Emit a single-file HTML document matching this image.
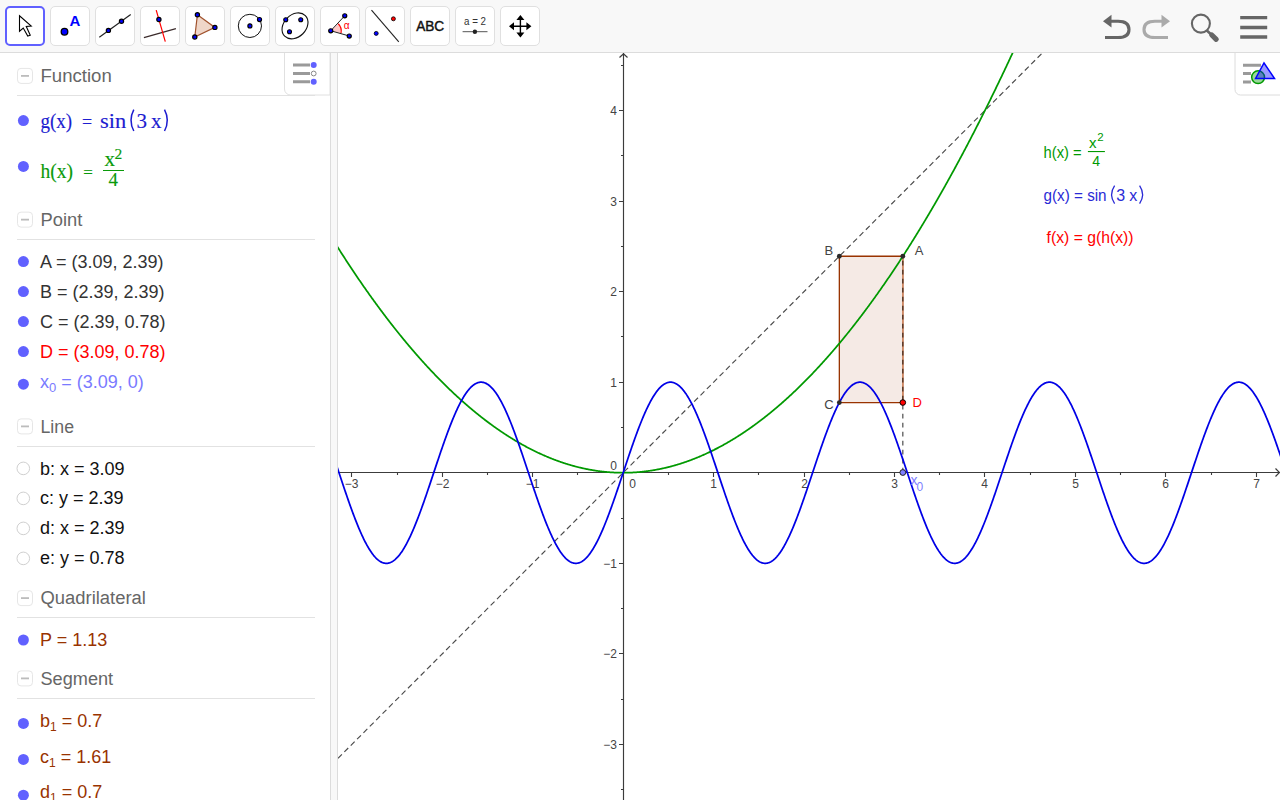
<!DOCTYPE html>
<html><head><meta charset="utf-8">
<style>
*{margin:0;padding:0;box-sizing:border-box}
html,body{width:1280px;height:800px;overflow:hidden;background:#fff;font-family:"Liberation Sans",sans-serif}
#tb{position:absolute;left:0;top:0;width:1280px;height:53px;background:#f8f8f8;border-bottom:1px solid #dcdcdc}
.btn{position:absolute;top:6px;width:40px;height:40px;background:#fff;border:1px solid #e0e0e0;border-radius:5px}
.btn.sel{border:2px solid #6060ff}
.btn svg{position:absolute;left:-1px;top:-1px}
.btn.sel svg{left:-2px;top:-2px}
#alg{position:absolute;left:0;top:53px;width:330px;height:747px;background:#fff}
#split{position:absolute;left:330px;top:53px;width:8px;height:747px;background:#f8f8f8;border-left:1px solid #dcdcdc;border-right:1px solid #dcdcdc}
.hdr{position:absolute;left:40px;font-size:18px;color:#666}
.cb{position:absolute;left:17px;width:15px;height:15px;border:1px solid #e4e4e4;border-radius:3px}
.cb:after{content:"";position:absolute;left:4px;top:6px;width:8px;height:2px;background:#b4b4b4}
.sep{position:absolute;left:17px;width:298px;height:1px;background:#e0e0e0}
.dot{position:absolute;left:18px;width:11px;height:11px;border-radius:50%;background:#6161ff}
.odot{position:absolute;left:17px;width:13px;height:13px;border-radius:50%;border:1px solid #c8c8c8;background:#fff}
.row{position:absolute;left:40px;font-size:17px;color:#333;white-space:nowrap}
.row sub{font-size:12px;vertical-align:-4px;line-height:0}
.ser{font-family:"Liberation Serif",serif}
</style></head><body>
<div id="tb">
  <div class="btn sel" style="left:5px"><svg width="40" height="40"><path d="M14.5,9.75 L14.5,25.25 L18.25,22 L22.75,30 L25.25,29.25 L21.25,20.5 L26.25,20 Z" fill="#fff" stroke="#000" stroke-width="1.1" stroke-linejoin="miter"/></svg></div>
  <div class="btn" style="left:50px"><svg width="40" height="40"><circle cx="14.5" cy="25.75" r="3.3" fill="#0000ff" stroke="#000" stroke-width="1.3"/><text x="19.6" y="20" font-family="Liberation Sans" font-weight="bold" font-size="15" fill="#0000ff">A</text></svg></div>
  <div class="btn" style="left:95px"><svg width="40" height="40"><line x1="4.3" y1="31.2" x2="35.7" y2="8.6" stroke="#222" stroke-width="1.2"/><circle cx="13.4" cy="24.4" r="2.1" fill="#0000ff" stroke="#000" stroke-width="1.2"/><circle cx="26.5" cy="15.3" r="2.1" fill="#0000ff" stroke="#000" stroke-width="1.2"/></svg></div>
  <div class="btn" style="left:140px"><svg width="40" height="40"><line x1="3.9" y1="31.7" x2="35.9" y2="22.7" stroke="#3a2a2a" stroke-width="1.2"/><line x1="16.2" y1="4.1" x2="25.3" y2="35.6" stroke="#ff0000" stroke-width="1.2"/><circle cx="18.9" cy="13.5" r="2.1" fill="#0000ff" stroke="#000" stroke-width="1.2"/></svg></div>
  <div class="btn" style="left:185px"><svg width="40" height="40"><path d="M12.4,8.8 L29.9,21.4 L9.8,31 Z" fill="#efd6c8" stroke="#a0522d" stroke-width="1.2"/><circle cx="12.4" cy="8.8" r="2.1" fill="#0000ff" stroke="#000" stroke-width="1.2"/><circle cx="29.9" cy="21.4" r="2.1" fill="#0000ff" stroke="#000" stroke-width="1.2"/><circle cx="9.8" cy="31" r="2.1" fill="#0000ff" stroke="#000" stroke-width="1.2"/></svg></div>
  <div class="btn" style="left:230px"><svg width="40" height="40"><circle cx="19.9" cy="19.9" r="11.6" fill="none" stroke="#111" stroke-width="1"/><circle cx="19.9" cy="19.9" r="2.05" fill="#0000ff" stroke="#000" stroke-width="1.15"/><circle cx="29.5" cy="13.5" r="2.05" fill="#0000ff" stroke="#000" stroke-width="1.15"/></svg></div>
  <div class="btn" style="left:275px"><svg width="40" height="40"><ellipse cx="20" cy="19.9" rx="14.6" ry="11.1" transform="rotate(-45 20 19.9)" fill="none" stroke="#111" stroke-width="1.1"/><circle cx="10.75" cy="13.75" r="2.0" fill="#0000ff" stroke="#000" stroke-width="1.1"/><circle cx="25.75" cy="13.75" r="2.0" fill="#0000ff" stroke="#000" stroke-width="1.1"/><circle cx="14.5" cy="25.75" r="2.0" fill="#0000ff" stroke="#000" stroke-width="1.1"/></svg></div>
  <div class="btn" style="left:320px"><svg width="40" height="40"><path d="M10.75,24.75 L18.25,17.75 A10.3,10.3 0 0 1 21,27.25 Z" fill="#ffc8c8"/><path d="M18.25,17.75 A10.3,10.3 0 0 1 21,27.25" fill="none" stroke="#ff0000" stroke-width="1.2"/><line x1="10.75" y1="24.75" x2="24.75" y2="9.75" stroke="#222" stroke-width="1"/><line x1="10.75" y1="24.75" x2="29.25" y2="30" stroke="#222" stroke-width="1"/><circle cx="10.75" cy="24.75" r="2.05" fill="#0000ff" stroke="#000" stroke-width="1.15"/><circle cx="24.75" cy="9.75" r="2.05" fill="#0000ff" stroke="#000" stroke-width="1.15"/><circle cx="29.25" cy="30" r="2.05" fill="#0000ff" stroke="#000" stroke-width="1.15"/><text x="23.8" y="22.8" font-family="Liberation Sans" font-size="10" fill="#ff0000">α</text></svg></div>
  <div class="btn" style="left:365px"><svg width="40" height="40"><line x1="6.5" y1="4.1" x2="33.8" y2="35.8" stroke="#222" stroke-width="1.1"/><circle cx="28.4" cy="12.8" r="2" fill="#ff0000" stroke="#000" stroke-width="0.8"/><circle cx="11.2" cy="27.4" r="2" fill="#0000ff" stroke="#000" stroke-width="0.8"/></svg></div>
  <div class="btn" style="left:410px"><svg width="40" height="40"><text x="20.2" y="25.3" text-anchor="middle" font-family="Liberation Sans" font-size="14.2" fill="#111" stroke="#111" stroke-width="0.45" textLength="28" lengthAdjust="spacingAndGlyphs">ABC</text></svg></div>
  <div class="btn" style="left:455px"><svg width="40" height="40"><text x="20" y="18.6" text-anchor="middle" font-family="Liberation Sans" font-size="10.2" fill="#333" textLength="22" lengthAdjust="spacingAndGlyphs">a = 2</text><line x1="7.6" y1="25.7" x2="32.5" y2="25.7" stroke="#555" stroke-width="1"/><circle cx="19.9" cy="25.7" r="2.2" fill="#222"/></svg></div>
  <div class="btn" style="left:500px"><svg width="40" height="40"><path d="M20.4,9 L24.4,14 L16.4,14 Z M20.4,31.4 L24.4,26.4 L16.4,26.4 Z M9,20.3 L14,16.3 L14,24.3 Z M31.4,20.3 L26.4,16.3 L26.4,24.3 Z" fill="#000"/><path d="M20.4,13 V27.4 M13,20.3 H27.4" stroke="#000" stroke-width="1.4"/></svg></div>
  <!-- right icons -->
  <svg width="1280" height="53" style="position:absolute;left:0;top:0">
    <path d="M1103,21.2 L1111.5,14.8 L1111.5,27.6 Z" fill="#666"/>
    <path d="M1110,21.2 H1118 C1126,21.2 1129,24.5 1129,29.4 C1129,34.3 1126,37.5 1118,37.5 H1105" fill="none" stroke="#666" stroke-width="3.1"/>
    <path d="M1170,21.2 L1161.5,14.8 L1161.5,27.6 Z" fill="#aaa"/>
    <path d="M1163,21.2 H1155 C1147,21.2 1144,24.5 1144,29.4 C1144,34.3 1147,37.5 1155,37.5 H1168" fill="none" stroke="#aaa" stroke-width="3.1"/>
    <circle cx="1200.9" cy="23.6" r="9" fill="none" stroke="#666" stroke-width="2.1"/>
    <path d="M1206.5,30.2 L1211.5,34.8" stroke="#666" stroke-width="2.6"/>
    <path d="M1211.8,35 L1216.2,39.3" stroke="#666" stroke-width="5.2" stroke-linecap="round"/>
    <path d="M1240.2,17.7 H1267.2 M1240.2,27.5 H1267.2 M1240.2,37 H1267.2" stroke="#666" stroke-width="3.3"/>
  </svg>
</div>
<div id="alg"></div>
<svg width="330" height="800" style="position:absolute;left:0;top:0">
<rect x="17.5" y="68.4" width="15" height="15" rx="3.5" fill="#fff" stroke="#e6e6e6" stroke-width="1"/>
<rect x="21" y="75" width="8" height="1.8" fill="#bcbcbc"/>
<text x="40.5" y="82" font-family="Liberation Sans, sans-serif" font-size="18" fill="#666" textLength="71.3" lengthAdjust="spacingAndGlyphs">Function</text>
<rect x="17" y="95" width="298" height="1" fill="#e2e2e2"/>
<circle cx="23.4" cy="120.6" r="5.5" fill="#6161ff"/>
<g font-family="Liberation Serif, serif" font-size="21" fill="#1d1dd0" stroke="#1d1dd0" stroke-width="0.15"><text x="40.5" y="127.9" textLength="31.7" lengthAdjust="spacingAndGlyphs">g(x)</text><text x="82" y="127.9" font-size="18">=</text><text x="100" y="127.9" textLength="26.2" lengthAdjust="spacingAndGlyphs">sin</text><text x="136.6" y="127.9">3</text><text x="151" y="127.9">x</text></g>
<path d="M133.8,109.6 Q128.2,120.3 133.8,131" fill="none" stroke="#1d1dd0" stroke-width="1.5"/>
<path d="M164.5,109.6 Q170.1,120.3 164.5,131" fill="none" stroke="#1d1dd0" stroke-width="1.5"/>
<circle cx="23.4" cy="166.4" r="5.5" fill="#6161ff"/>
<g font-family="Liberation Serif, serif" font-size="21" fill="#0a9a0a" stroke="#0a9a0a" stroke-width="0.15"><text x="40.5" y="177.7" textLength="32.5" lengthAdjust="spacingAndGlyphs">h(x)</text><text x="83.3" y="177.7" font-size="17">=</text><text x="104.5" y="165.7">x</text><text x="114.6" y="159" font-size="15.5">2</text><text x="108.5" y="186" font-size="19">4</text></g>
<rect x="103" y="170" width="21" height="1" fill="#0a9a0a"/>
<rect x="17.5" y="212.15" width="15" height="15" rx="3.5" fill="#fff" stroke="#e6e6e6" stroke-width="1"/>
<rect x="21" y="218.75" width="8" height="1.8" fill="#bcbcbc"/>
<text x="40.5" y="225.75" font-family="Liberation Sans, sans-serif" font-size="18" fill="#666" textLength="41.8" lengthAdjust="spacingAndGlyphs">Point</text>
<rect x="17" y="239" width="298" height="1" fill="#e2e2e2"/>
<circle cx="23.4" cy="261.6" r="5.5" fill="#6161ff"/>
<text x="40" y="268" font-family="Liberation Sans, sans-serif" font-size="18" fill="#333">A = (3.09, 2.39)</text>
<circle cx="23.4" cy="291.6" r="5.5" fill="#6161ff"/>
<text x="40" y="298" font-family="Liberation Sans, sans-serif" font-size="18" fill="#333">B = (2.39, 2.39)</text>
<circle cx="23.4" cy="321.6" r="5.5" fill="#6161ff"/>
<text x="40" y="328" font-family="Liberation Sans, sans-serif" font-size="18" fill="#333">C = (2.39, 0.78)</text>
<circle cx="23.4" cy="351.6" r="5.5" fill="#6161ff"/>
<text x="40" y="358" font-family="Liberation Sans, sans-serif" font-size="18" fill="#ff0000">D = (3.09, 0.78)</text>
<circle cx="23.4" cy="384.2" r="5.5" fill="#6161ff"/>
<text x="40" y="387.5" font-family="Liberation Sans, sans-serif" font-size="18" fill="#7a7aff">x<tspan font-size="13" dy="4">0</tspan><tspan dy="-4"> = (3.09, 0)</tspan></text>
<rect x="17.5" y="418.9" width="15" height="15" rx="3.5" fill="#fff" stroke="#e6e6e6" stroke-width="1"/>
<rect x="21" y="425.5" width="8" height="1.8" fill="#bcbcbc"/>
<text x="40.5" y="432.5" font-family="Liberation Sans, sans-serif" font-size="18" fill="#666" textLength="33.5" lengthAdjust="spacingAndGlyphs">Line</text>
<rect x="17" y="446" width="298" height="1" fill="#e2e2e2"/>
<circle cx="23.3" cy="468.4" r="6.3" fill="#fff" stroke="#d0d0d0" stroke-width="1"/>
<text x="40" y="474.5" font-family="Liberation Sans, sans-serif" font-size="18" fill="#111">b: x = 3.09</text>
<circle cx="23.3" cy="498.4" r="6.3" fill="#fff" stroke="#d0d0d0" stroke-width="1"/>
<text x="40" y="504.2" font-family="Liberation Sans, sans-serif" font-size="18" fill="#111">c: y = 2.39</text>
<circle cx="23.3" cy="528.4" r="6.3" fill="#fff" stroke="#d0d0d0" stroke-width="1"/>
<text x="40" y="534.2" font-family="Liberation Sans, sans-serif" font-size="18" fill="#111">d: x = 2.39</text>
<circle cx="23.3" cy="558.4" r="6.3" fill="#fff" stroke="#d0d0d0" stroke-width="1"/>
<text x="40" y="564" font-family="Liberation Sans, sans-serif" font-size="18" fill="#111">e: y = 0.78</text>
<rect x="17.5" y="590.6" width="15" height="15" rx="3.5" fill="#fff" stroke="#e6e6e6" stroke-width="1"/>
<rect x="21" y="597.2" width="8" height="1.8" fill="#bcbcbc"/>
<text x="40.5" y="604.2" font-family="Liberation Sans, sans-serif" font-size="18" fill="#666" textLength="105.4" lengthAdjust="spacingAndGlyphs">Quadrilateral</text>
<rect x="17" y="617" width="298" height="1" fill="#e2e2e2"/>
<circle cx="23.4" cy="640" r="5.5" fill="#6161ff"/>
<text x="40" y="646" font-family="Liberation Sans, sans-serif" font-size="18" fill="#993300">P = 1.13</text>
<rect x="17.5" y="670.9" width="15" height="15" rx="3.5" fill="#fff" stroke="#e6e6e6" stroke-width="1"/>
<rect x="21" y="677.5" width="8" height="1.8" fill="#bcbcbc"/>
<text x="40.5" y="684.5" font-family="Liberation Sans, sans-serif" font-size="18" fill="#666" textLength="72.6" lengthAdjust="spacingAndGlyphs">Segment</text>
<rect x="17" y="698" width="298" height="1" fill="#e2e2e2"/>
<circle cx="23.4" cy="723.4" r="5.5" fill="#6161ff"/>
<text x="40" y="726.9" font-family="Liberation Sans, sans-serif" font-size="18" fill="#993300">b<tspan font-size="12" dy="4">1</tspan><tspan dy="-4"> = 0.7</tspan></text>
<circle cx="23.4" cy="759.4" r="5.5" fill="#6161ff"/>
<text x="40" y="762.5" font-family="Liberation Sans, sans-serif" font-size="18" fill="#993300">c<tspan font-size="12" dy="4">1</tspan><tspan dy="-4"> = 1.61</tspan></text>
<circle cx="23.4" cy="795.2" r="5.5" fill="#6161ff"/>
<text x="40" y="798.1" font-family="Liberation Sans, sans-serif" font-size="18" fill="#993300">d<tspan font-size="12" dy="4">1</tspan><tspan dy="-4"> = 0.7</tspan></text>
<path d="M330,53 V95 H290.5 A6,6 0 0 1 284.5,89 V53" fill="#fff" stroke="#e0e0e0" stroke-width="1"/>
<path d="M293,65 H310 M293,73.5 H310 M293,81.8 H310" stroke="#9a9a9a" stroke-width="3"/>
<circle cx="313.7" cy="65" r="3" fill="#6161ff"/><circle cx="313.7" cy="81.8" r="3" fill="#6161ff"/><circle cx="313.7" cy="73.5" r="2.4" fill="#fff" stroke="#888" stroke-width="1"/>
</svg>
<div id="split"></div>
<svg width="1280" height="800" style="position:absolute;left:0;top:0">
<defs><clipPath id="gv"><rect x="338" y="53" width="942" height="747"/></clipPath></defs>
<g clip-path="url(#gv)">
<line x1="338" y1="472.5" x2="1280" y2="472.5" stroke="#3c3c3c" stroke-width="1.15"/>
<line x1="623.5" y1="53" x2="623.5" y2="800" stroke="#3c3c3c" stroke-width="1.15"/>
<path d="M1275.5,468.5 L1279.5,472.5 L1275.5,476.5" fill="none" stroke="#3c3c3c" stroke-width="1.2"/>
<path d="M619.5,57.5 L623.5,53.8 L627.5,57.5" fill="none" stroke="#3c3c3c" stroke-width="1.2"/>
<path d="M351.5,472.5 v4.5 M397.5,472.5 v2.5 M442.5,472.5 v4.5 M487.5,472.5 v2.5 M532.5,472.5 v4.5 M577.5,472.5 v2.5 M668.5,472.5 v2.5 M713.5,472.5 v4.5 M758.5,472.5 v2.5 M804.5,472.5 v4.5 M849.5,472.5 v2.5 M894.5,472.5 v4.5 M939.5,472.5 v2.5 M984.5,472.5 v4.5 M1030.5,472.5 v2.5 M1075.5,472.5 v4.5 M1120.5,472.5 v2.5 M1165.5,472.5 v4.5 M1211.5,472.5 v2.5 M1256.5,472.5 v4.5 M623.5,789.5 h-2.5 M623.5,744.5 h-4.5 M623.5,699.5 h-2.5 M623.5,653.5 h-4.5 M623.5,608.5 h-2.5 M623.5,563.5 h-4.5 M623.5,518.5 h-2.5 M623.5,427.5 h-2.5 M623.5,382.5 h-4.5 M623.5,336.5 h-2.5 M623.5,291.5 h-4.5 M623.5,246.5 h-2.5 M623.5,201.5 h-4.5 M623.5,155.5 h-2.5 M623.5,110.5 h-4.5 M623.5,65.5 h-2.5" stroke="#3c3c3c" stroke-width="1.1" fill="none"/>
<g font-family="Liberation Sans, sans-serif" font-size="12" fill="#444"><text x="351.5" y="487.7" text-anchor="middle">−3</text><text x="442.5" y="487.7" text-anchor="middle">−2</text><text x="532.5" y="487.7" text-anchor="middle">−1</text><text x="713.5" y="487.7" text-anchor="middle">1</text><text x="804.5" y="487.7" text-anchor="middle">2</text><text x="894.5" y="487.7" text-anchor="middle">3</text><text x="984.5" y="487.7" text-anchor="middle">4</text><text x="1075.5" y="487.7" text-anchor="middle">5</text><text x="1165.5" y="487.7" text-anchor="middle">6</text><text x="1256.5" y="487.7" text-anchor="middle">7</text><text x="617" y="748.8" text-anchor="end">−3</text><text x="617" y="657.8" text-anchor="end">−2</text><text x="617" y="567.8" text-anchor="end">−1</text><text x="617" y="386.8" text-anchor="end">1</text><text x="617" y="295.8" text-anchor="end">2</text><text x="617" y="205.8" text-anchor="end">3</text><text x="617" y="114.8" text-anchor="end">4</text><text x="629.3" y="487.7">0</text><text x="610.2" y="469.7">0</text></g>
<line x1="338.00" y1="758.28" x2="1042.34" y2="53.00" stroke="#4a4a4a" stroke-width="1.15" stroke-dasharray="5.5 3.5"/>
<path d="M839.34,256.27 L902.82,256.27 L902.82,402.53 L839.34,402.53 Z" fill="rgba(153,51,0,0.1)" stroke="#993300" stroke-width="1.3"/>
<line x1="902.82" y1="402.53" x2="902.82" y2="256.27" stroke="#d4906c" stroke-width="1.4"/>
<line x1="902.82" y1="472.5" x2="902.82" y2="256.27" stroke="rgba(0,0,0,0.7)" stroke-width="1.2" stroke-dasharray="4.75 4.25"/>
<path d="M336.00,244.54 L336.50,245.34 L337.00,246.13 L337.50,246.92 L338.00,247.71 L338.50,248.50 L339.00,249.29 L339.50,250.07 L340.00,250.86 L340.50,251.64 L341.00,252.42 L341.50,253.20 L342.00,253.98 L342.50,254.76 L343.00,255.53 L343.50,256.31 L344.00,257.08 L344.50,257.85 L345.00,258.62 L345.50,259.39 L346.00,260.16 L346.50,260.93 L347.00,261.69 L347.50,262.46 L348.00,263.22 L348.50,263.98 L349.00,264.74 L349.50,265.50 L350.00,266.25 L350.50,267.01 L351.00,267.76 L351.50,268.51 L352.00,269.27 L352.50,270.02 L353.00,270.76 L353.50,271.51 L354.00,272.26 L354.50,273.00 L355.00,273.74 L355.50,274.48 L356.00,275.22 L356.50,275.96 L357.00,276.70 L357.50,277.44 L358.00,278.17 L358.50,278.90 L359.00,279.64 L359.50,280.37 L360.00,281.10 L360.50,281.82 L361.00,282.55 L361.50,283.27 L362.00,284.00 L362.50,284.72 L363.00,285.44 L363.50,286.16 L364.00,286.88 L364.50,287.59 L365.00,288.31 L365.50,289.02 L366.00,289.74 L366.50,290.45 L367.00,291.16 L367.50,291.86 L368.00,292.57 L368.50,293.28 L369.00,293.98 L369.50,294.68 L370.00,295.39 L370.50,296.08 L371.00,296.78 L371.50,297.48 L372.00,298.18 L372.50,298.87 L373.00,299.56 L373.50,300.26 L374.00,300.95 L374.50,301.63 L375.00,302.32 L375.50,303.01 L376.00,303.69 L376.50,304.38 L377.00,305.06 L377.50,305.74 L378.00,306.42 L378.50,307.10 L379.00,307.77 L379.50,308.45 L380.00,309.12 L380.50,309.79 L381.00,310.46 L381.50,311.13 L382.00,311.80 L382.50,312.47 L383.00,313.13 L383.50,313.80 L384.00,314.46 L384.50,315.12 L385.00,315.78 L385.50,316.44 L386.00,317.10 L386.50,317.75 L387.00,318.41 L387.50,319.06 L388.00,319.71 L388.50,320.36 L389.00,321.01 L389.50,321.66 L390.00,322.30 L390.50,322.95 L391.00,323.59 L391.50,324.23 L392.00,324.87 L392.50,325.51 L393.00,326.15 L393.50,326.79 L394.00,327.42 L394.50,328.05 L395.00,328.69 L395.50,329.32 L396.00,329.95 L396.50,330.57 L397.00,331.20 L397.50,331.83 L398.00,332.45 L398.50,333.07 L399.00,333.69 L399.50,334.31 L400.00,334.93 L400.50,335.55 L401.00,336.16 L401.50,336.78 L402.00,337.39 L402.50,338.00 L403.00,338.61 L403.50,339.22 L404.00,339.83 L404.50,340.43 L405.00,341.04 L405.50,341.64 L406.00,342.24 L406.50,342.84 L407.00,343.44 L407.50,344.04 L408.00,344.64 L408.50,345.23 L409.00,345.82 L409.50,346.42 L410.00,347.01 L410.50,347.60 L411.00,348.18 L411.50,348.77 L412.00,349.36 L412.50,349.94 L413.00,350.52 L413.50,351.10 L414.00,351.68 L414.50,352.26 L415.00,352.84 L415.50,353.41 L416.00,353.99 L416.50,354.56 L417.00,355.13 L417.50,355.70 L418.00,356.27 L418.50,356.84 L419.00,357.40 L419.50,357.97 L420.00,358.53 L420.50,359.09 L421.00,359.65 L421.50,360.21 L422.00,360.77 L422.50,361.32 L423.00,361.88 L423.50,362.43 L424.00,362.98 L424.50,363.53 L425.00,364.08 L425.50,364.63 L426.00,365.18 L426.50,365.72 L427.00,366.26 L427.50,366.81 L428.00,367.35 L428.50,367.89 L429.00,368.43 L429.50,368.96 L430.00,369.50 L430.50,370.03 L431.00,370.56 L431.50,371.09 L432.00,371.62 L432.50,372.15 L433.00,372.68 L433.50,373.21 L434.00,373.73 L434.50,374.25 L435.00,374.77 L435.50,375.29 L436.00,375.81 L436.50,376.33 L437.00,376.85 L437.50,377.36 L438.00,377.87 L438.50,378.39 L439.00,378.90 L439.50,379.40 L440.00,379.91 L440.50,380.42 L441.00,380.92 L441.50,381.43 L442.00,381.93 L442.50,382.43 L443.00,382.93 L443.50,383.43 L444.00,383.92 L444.50,384.42 L445.00,384.91 L445.50,385.40 L446.00,385.90 L446.50,386.38 L447.00,386.87 L447.50,387.36 L448.00,387.85 L448.50,388.33 L449.00,388.81 L449.50,389.29 L450.00,389.77 L450.50,390.25 L451.00,390.73 L451.50,391.20 L452.00,391.68 L452.50,392.15 L453.00,392.62 L453.50,393.09 L454.00,393.56 L454.50,394.03 L455.00,394.50 L455.50,394.96 L456.00,395.42 L456.50,395.89 L457.00,396.35 L457.50,396.81 L458.00,397.26 L458.50,397.72 L459.00,398.17 L459.50,398.63 L460.00,399.08 L460.50,399.53 L461.00,399.98 L461.50,400.43 L462.00,400.88 L462.50,401.32 L463.00,401.77 L463.50,402.21 L464.00,402.65 L464.50,403.09 L465.00,403.53 L465.50,403.96 L466.00,404.40 L466.50,404.83 L467.00,405.27 L467.50,405.70 L468.00,406.13 L468.50,406.56 L469.00,406.98 L469.50,407.41 L470.00,407.83 L470.50,408.26 L471.00,408.68 L471.50,409.10 L472.00,409.52 L472.50,409.94 L473.00,410.35 L473.50,410.77 L474.00,411.18 L474.50,411.59 L475.00,412.00 L475.50,412.41 L476.00,412.82 L476.50,413.23 L477.00,413.63 L477.50,414.04 L478.00,414.44 L478.50,414.84 L479.00,415.24 L479.50,415.64 L480.00,416.04 L480.50,416.43 L481.00,416.83 L481.50,417.22 L482.00,417.61 L482.50,418.00 L483.00,418.39 L483.50,418.77 L484.00,419.16 L484.50,419.55 L485.00,419.93 L485.50,420.31 L486.00,420.69 L486.50,421.07 L487.00,421.45 L487.50,421.82 L488.00,422.20 L488.50,422.57 L489.00,422.94 L489.50,423.31 L490.00,423.68 L490.50,424.05 L491.00,424.42 L491.50,424.78 L492.00,425.15 L492.50,425.51 L493.00,425.87 L493.50,426.23 L494.00,426.59 L494.50,426.94 L495.00,427.30 L495.50,427.65 L496.00,428.00 L496.50,428.36 L497.00,428.71 L497.50,429.05 L498.00,429.40 L498.50,429.75 L499.00,430.09 L499.50,430.43 L500.00,430.78 L500.50,431.12 L501.00,431.45 L501.50,431.79 L502.00,432.13 L502.50,432.46 L503.00,432.80 L503.50,433.13 L504.00,433.46 L504.50,433.79 L505.00,434.12 L505.50,434.44 L506.00,434.77 L506.50,435.09 L507.00,435.41 L507.50,435.73 L508.00,436.05 L508.50,436.37 L509.00,436.69 L509.50,437.00 L510.00,437.32 L510.50,437.63 L511.00,437.94 L511.50,438.25 L512.00,438.56 L512.50,438.86 L513.00,439.17 L513.50,439.47 L514.00,439.78 L514.50,440.08 L515.00,440.38 L515.50,440.68 L516.00,440.97 L516.50,441.27 L517.00,441.56 L517.50,441.86 L518.00,442.15 L518.50,442.44 L519.00,442.73 L519.50,443.02 L520.00,443.30 L520.50,443.59 L521.00,443.87 L521.50,444.15 L522.00,444.43 L522.50,444.71 L523.00,444.99 L523.50,445.27 L524.00,445.54 L524.50,445.82 L525.00,446.09 L525.50,446.36 L526.00,446.63 L526.50,446.90 L527.00,447.16 L527.50,447.43 L528.00,447.69 L528.50,447.96 L529.00,448.22 L529.50,448.48 L530.00,448.74 L530.50,448.99 L531.00,449.25 L531.50,449.50 L532.00,449.76 L532.50,450.01 L533.00,450.26 L533.50,450.51 L534.00,450.75 L534.50,451.00 L535.00,451.24 L535.50,451.49 L536.00,451.73 L536.50,451.97 L537.00,452.21 L537.50,452.45 L538.00,452.68 L538.50,452.92 L539.00,453.15 L539.50,453.38 L540.00,453.61 L540.50,453.84 L541.00,454.07 L541.50,454.30 L542.00,454.52 L542.50,454.75 L543.00,454.97 L543.50,455.19 L544.00,455.41 L544.50,455.63 L545.00,455.85 L545.50,456.06 L546.00,456.28 L546.50,456.49 L547.00,456.70 L547.50,456.91 L548.00,457.12 L548.50,457.33 L549.00,457.53 L549.50,457.74 L550.00,457.94 L550.50,458.14 L551.00,458.34 L551.50,458.54 L552.00,458.74 L552.50,458.94 L553.00,459.13 L553.50,459.32 L554.00,459.52 L554.50,459.71 L555.00,459.90 L555.50,460.08 L556.00,460.27 L556.50,460.46 L557.00,460.64 L557.50,460.82 L558.00,461.00 L558.50,461.18 L559.00,461.36 L559.50,461.54 L560.00,461.71 L560.50,461.89 L561.00,462.06 L561.50,462.23 L562.00,462.40 L562.50,462.57 L563.00,462.74 L563.50,462.90 L564.00,463.07 L564.50,463.23 L565.00,463.39 L565.50,463.55 L566.00,463.71 L566.50,463.87 L567.00,464.02 L567.50,464.18 L568.00,464.33 L568.50,464.48 L569.00,464.63 L569.50,464.78 L570.00,464.93 L570.50,465.08 L571.00,465.22 L571.50,465.37 L572.00,465.51 L572.50,465.65 L573.00,465.79 L573.50,465.93 L574.00,466.06 L574.50,466.20 L575.00,466.33 L575.50,466.47 L576.00,466.60 L576.50,466.73 L577.00,466.86 L577.50,466.98 L578.00,467.11 L578.50,467.23 L579.00,467.36 L579.50,467.48 L580.00,467.60 L580.50,467.72 L581.00,467.83 L581.50,467.95 L582.00,468.06 L582.50,468.18 L583.00,468.29 L583.50,468.40 L584.00,468.51 L584.50,468.62 L585.00,468.72 L585.50,468.83 L586.00,468.93 L586.50,469.03 L587.00,469.13 L587.50,469.23 L588.00,469.33 L588.50,469.43 L589.00,469.52 L589.50,469.62 L590.00,469.71 L590.50,469.80 L591.00,469.89 L591.50,469.98 L592.00,470.06 L592.50,470.15 L593.00,470.23 L593.50,470.32 L594.00,470.40 L594.50,470.48 L595.00,470.56 L595.50,470.63 L596.00,470.71 L596.50,470.78 L597.00,470.86 L597.50,470.93 L598.00,471.00 L598.50,471.07 L599.00,471.14 L599.50,471.20 L600.00,471.27 L600.50,471.33 L601.00,471.39 L601.50,471.45 L602.00,471.51 L602.50,471.57 L603.00,471.63 L603.50,471.68 L604.00,471.74 L604.50,471.79 L605.00,471.84 L605.50,471.89 L606.00,471.94 L606.50,471.98 L607.00,472.03 L607.50,472.07 L608.00,472.11 L608.50,472.16 L609.00,472.20 L609.50,472.23 L610.00,472.27 L610.50,472.31 L611.00,472.34 L611.50,472.37 L612.00,472.41 L612.50,472.44 L613.00,472.46 L613.50,472.49 L614.00,472.52 L614.50,472.54 L615.00,472.57 L615.50,472.59 L616.00,472.61 L616.50,472.63 L617.00,472.65 L617.50,472.66 L618.00,472.68 L618.50,472.69 L619.00,472.70 L619.50,472.71 L620.00,472.72 L620.50,472.73 L621.00,472.74 L621.50,472.74 L622.00,472.75 L622.50,472.75 L623.00,472.75 L623.50,472.75 L624.00,472.75 L624.50,472.74 L625.00,472.74 L625.50,472.73 L626.00,472.73 L626.50,472.72 L627.00,472.71 L627.50,472.70 L628.00,472.68 L628.50,472.67 L629.00,472.66 L629.50,472.64 L630.00,472.62 L630.50,472.60 L631.00,472.58 L631.50,472.56 L632.00,472.53 L632.50,472.51 L633.00,472.48 L633.50,472.45 L634.00,472.42 L634.50,472.39 L635.00,472.36 L635.50,472.33 L636.00,472.29 L636.50,472.26 L637.00,472.22 L637.50,472.18 L638.00,472.14 L638.50,472.10 L639.00,472.05 L639.50,472.01 L640.00,471.96 L640.50,471.92 L641.00,471.87 L641.50,471.82 L642.00,471.77 L642.50,471.71 L643.00,471.66 L643.50,471.60 L644.00,471.55 L644.50,471.49 L645.00,471.43 L645.50,471.37 L646.00,471.30 L646.50,471.24 L647.00,471.18 L647.50,471.11 L648.00,471.04 L648.50,470.97 L649.00,470.90 L649.50,470.83 L650.00,470.75 L650.50,470.68 L651.00,470.60 L651.50,470.53 L652.00,470.45 L652.50,470.37 L653.00,470.28 L653.50,470.20 L654.00,470.12 L654.50,470.03 L655.00,469.94 L655.50,469.85 L656.00,469.76 L656.50,469.67 L657.00,469.58 L657.50,469.48 L658.00,469.39 L658.50,469.29 L659.00,469.19 L659.50,469.09 L660.00,468.99 L660.50,468.89 L661.00,468.78 L661.50,468.68 L662.00,468.57 L662.50,468.46 L663.00,468.35 L663.50,468.24 L664.00,468.13 L664.50,468.02 L665.00,467.90 L665.50,467.79 L666.00,467.67 L666.50,467.55 L667.00,467.43 L667.50,467.31 L668.00,467.18 L668.50,467.06 L669.00,466.93 L669.50,466.80 L670.00,466.68 L670.50,466.54 L671.00,466.41 L671.50,466.28 L672.00,466.15 L672.50,466.01 L673.00,465.87 L673.50,465.73 L674.00,465.59 L674.50,465.45 L675.00,465.31 L675.50,465.17 L676.00,465.02 L676.50,464.87 L677.00,464.72 L677.50,464.57 L678.00,464.42 L678.50,464.27 L679.00,464.12 L679.50,463.96 L680.00,463.81 L680.50,463.65 L681.00,463.49 L681.50,463.33 L682.00,463.16 L682.50,463.00 L683.00,462.84 L683.50,462.67 L684.00,462.50 L684.50,462.33 L685.00,462.16 L685.50,461.99 L686.00,461.82 L686.50,461.64 L687.00,461.47 L687.50,461.29 L688.00,461.11 L688.50,460.93 L689.00,460.75 L689.50,460.57 L690.00,460.38 L690.50,460.20 L691.00,460.01 L691.50,459.82 L692.00,459.63 L692.50,459.44 L693.00,459.25 L693.50,459.05 L694.00,458.86 L694.50,458.66 L695.00,458.46 L695.50,458.26 L696.00,458.06 L696.50,457.86 L697.00,457.66 L697.50,457.45 L698.00,457.24 L698.50,457.04 L699.00,456.83 L699.50,456.62 L700.00,456.40 L700.50,456.19 L701.00,455.98 L701.50,455.76 L702.00,455.54 L702.50,455.32 L703.00,455.10 L703.50,454.88 L704.00,454.66 L704.50,454.43 L705.00,454.21 L705.50,453.98 L706.00,453.75 L706.50,453.52 L707.00,453.29 L707.50,453.06 L708.00,452.82 L708.50,452.59 L709.00,452.35 L709.50,452.11 L710.00,451.87 L710.50,451.63 L711.00,451.39 L711.50,451.15 L712.00,450.90 L712.50,450.65 L713.00,450.41 L713.50,450.16 L714.00,449.91 L714.50,449.65 L715.00,449.40 L715.50,449.15 L716.00,448.89 L716.50,448.63 L717.00,448.37 L717.50,448.11 L718.00,447.85 L718.50,447.59 L719.00,447.32 L719.50,447.06 L720.00,446.79 L720.50,446.52 L721.00,446.25 L721.50,445.98 L722.00,445.71 L722.50,445.43 L723.00,445.16 L723.50,444.88 L724.00,444.60 L724.50,444.32 L725.00,444.04 L725.50,443.76 L726.00,443.47 L726.50,443.19 L727.00,442.90 L727.50,442.61 L728.00,442.32 L728.50,442.03 L729.00,441.74 L729.50,441.45 L730.00,441.15 L730.50,440.86 L731.00,440.56 L731.50,440.26 L732.00,439.96 L732.50,439.66 L733.00,439.35 L733.50,439.05 L734.00,438.74 L734.50,438.43 L735.00,438.13 L735.50,437.82 L736.00,437.50 L736.50,437.19 L737.00,436.88 L737.50,436.56 L738.00,436.24 L738.50,435.92 L739.00,435.60 L739.50,435.28 L740.00,434.96 L740.50,434.64 L741.00,434.31 L741.50,433.98 L742.00,433.66 L742.50,433.33 L743.00,433.00 L743.50,432.66 L744.00,432.33 L744.50,431.99 L745.00,431.66 L745.50,431.32 L746.00,430.98 L746.50,430.64 L747.00,430.30 L747.50,429.95 L748.00,429.61 L748.50,429.26 L749.00,428.92 L749.50,428.57 L750.00,428.22 L750.50,427.86 L751.00,427.51 L751.50,427.16 L752.00,426.80 L752.50,426.44 L753.00,426.08 L753.50,425.72 L754.00,425.36 L754.50,425.00 L755.00,424.64 L755.50,424.27 L756.00,423.90 L756.50,423.53 L757.00,423.17 L757.50,422.79 L758.00,422.42 L758.50,422.05 L759.00,421.67 L759.50,421.30 L760.00,420.92 L760.50,420.54 L761.00,420.16 L761.50,419.78 L762.00,419.39 L762.50,419.01 L763.00,418.62 L763.50,418.23 L764.00,417.84 L764.50,417.45 L765.00,417.06 L765.50,416.67 L766.00,416.27 L766.50,415.88 L767.00,415.48 L767.50,415.08 L768.00,414.68 L768.50,414.28 L769.00,413.88 L769.50,413.47 L770.00,413.07 L770.50,412.66 L771.00,412.25 L771.50,411.84 L772.00,411.43 L772.50,411.02 L773.00,410.60 L773.50,410.19 L774.00,409.77 L774.50,409.35 L775.00,408.93 L775.50,408.51 L776.00,408.09 L776.50,407.67 L777.00,407.24 L777.50,406.81 L778.00,406.39 L778.50,405.96 L779.00,405.53 L779.50,405.09 L780.00,404.66 L780.50,404.23 L781.00,403.79 L781.50,403.35 L782.00,402.91 L782.50,402.47 L783.00,402.03 L783.50,401.59 L784.00,401.14 L784.50,400.70 L785.00,400.25 L785.50,399.80 L786.00,399.35 L786.50,398.90 L787.00,398.45 L787.50,397.99 L788.00,397.54 L788.50,397.08 L789.00,396.62 L789.50,396.16 L790.00,395.70 L790.50,395.24 L791.00,394.78 L791.50,394.31 L792.00,393.84 L792.50,393.38 L793.00,392.91 L793.50,392.44 L794.00,391.96 L794.50,391.49 L795.00,391.01 L795.50,390.54 L796.00,390.06 L796.50,389.58 L797.00,389.10 L797.50,388.62 L798.00,388.14 L798.50,387.65 L799.00,387.17 L799.50,386.68 L800.00,386.19 L800.50,385.70 L801.00,385.21 L801.50,384.71 L802.00,384.22 L802.50,383.72 L803.00,383.23 L803.50,382.73 L804.00,382.23 L804.50,381.73 L805.00,381.23 L805.50,380.72 L806.00,380.22 L806.50,379.71 L807.00,379.20 L807.50,378.69 L808.00,378.18 L808.50,377.67 L809.00,377.15 L809.50,376.64 L810.00,376.12 L810.50,375.61 L811.00,375.09 L811.50,374.57 L812.00,374.04 L812.50,373.52 L813.00,373.00 L813.50,372.47 L814.00,371.94 L814.50,371.41 L815.00,370.88 L815.50,370.35 L816.00,369.82 L816.50,369.28 L817.00,368.75 L817.50,368.21 L818.00,367.67 L818.50,367.13 L819.00,366.59 L819.50,366.05 L820.00,365.50 L820.50,364.96 L821.00,364.41 L821.50,363.86 L822.00,363.31 L822.50,362.76 L823.00,362.21 L823.50,361.66 L824.00,361.10 L824.50,360.54 L825.00,359.99 L825.50,359.43 L826.00,358.87 L826.50,358.30 L827.00,357.74 L827.50,357.18 L828.00,356.61 L828.50,356.04 L829.00,355.47 L829.50,354.90 L830.00,354.33 L830.50,353.76 L831.00,353.18 L831.50,352.61 L832.00,352.03 L832.50,351.45 L833.00,350.87 L833.50,350.29 L834.00,349.71 L834.50,349.12 L835.00,348.54 L835.50,347.95 L836.00,347.36 L836.50,346.77 L837.00,346.18 L837.50,345.59 L838.00,344.99 L838.50,344.40 L839.00,343.80 L839.50,343.20 L840.00,342.60 L840.50,342.00 L841.00,341.40 L841.50,340.80 L842.00,340.19 L842.50,339.59 L843.00,338.98 L843.50,338.37 L844.00,337.76 L844.50,337.15 L845.00,336.53 L845.50,335.92 L846.00,335.30 L846.50,334.68 L847.00,334.07 L847.50,333.45 L848.00,332.82 L848.50,332.20 L849.00,331.58 L849.50,330.95 L850.00,330.32 L850.50,329.70 L851.00,329.07 L851.50,328.43 L852.00,327.80 L852.50,327.17 L853.00,326.53 L853.50,325.90 L854.00,325.26 L854.50,324.62 L855.00,323.98 L855.50,323.33 L856.00,322.69 L856.50,322.05 L857.00,321.40 L857.50,320.75 L858.00,320.10 L858.50,319.45 L859.00,318.80 L859.50,318.15 L860.00,317.49 L860.50,316.83 L861.00,316.18 L861.50,315.52 L862.00,314.86 L862.50,314.20 L863.00,313.53 L863.50,312.87 L864.00,312.20 L864.50,311.53 L865.00,310.87 L865.50,310.20 L866.00,309.52 L866.50,308.85 L867.00,308.18 L867.50,307.50 L868.00,306.82 L868.50,306.15 L869.00,305.47 L869.50,304.79 L870.00,304.10 L870.50,303.42 L871.00,302.73 L871.50,302.05 L872.00,301.36 L872.50,300.67 L873.00,299.98 L873.50,299.29 L874.00,298.59 L874.50,297.90 L875.00,297.20 L875.50,296.50 L876.00,295.81 L876.50,295.10 L877.00,294.40 L877.50,293.70 L878.00,292.99 L878.50,292.29 L879.00,291.58 L879.50,290.87 L880.00,290.16 L880.50,289.45 L881.00,288.74 L881.50,288.02 L882.00,287.31 L882.50,286.59 L883.00,285.87 L883.50,285.15 L884.00,284.43 L884.50,283.71 L885.00,282.98 L885.50,282.26 L886.00,281.53 L886.50,280.80 L887.00,280.07 L887.50,279.34 L888.00,278.61 L888.50,277.88 L889.00,277.14 L889.50,276.41 L890.00,275.67 L890.50,274.93 L891.00,274.19 L891.50,273.45 L892.00,272.70 L892.50,271.96 L893.00,271.21 L893.50,270.46 L894.00,269.72 L894.50,268.97 L895.00,268.21 L895.50,267.46 L896.00,266.71 L896.50,265.95 L897.00,265.19 L897.50,264.43 L898.00,263.67 L898.50,262.91 L899.00,262.15 L899.50,261.39 L900.00,260.62 L900.50,259.85 L901.00,259.09 L901.50,258.32 L902.00,257.54 L902.50,256.77 L903.00,256.00 L903.50,255.22 L904.00,254.45 L904.50,253.67 L905.00,252.89 L905.50,252.11 L906.00,251.33 L906.50,250.54 L907.00,249.76 L907.50,248.97 L908.00,248.18 L908.50,247.39 L909.00,246.60 L909.50,245.81 L910.00,245.02 L910.50,244.22 L911.00,243.43 L911.50,242.63 L912.00,241.83 L912.50,241.03 L913.00,240.23 L913.50,239.43 L914.00,238.62 L914.50,237.82 L915.00,237.01 L915.50,236.20 L916.00,235.39 L916.50,234.58 L917.00,233.77 L917.50,232.96 L918.00,232.14 L918.50,231.32 L919.00,230.50 L919.50,229.69 L920.00,228.86 L920.50,228.04 L921.00,227.22 L921.50,226.39 L922.00,225.57 L922.50,224.74 L923.00,223.91 L923.50,223.08 L924.00,222.25 L924.50,221.41 L925.00,220.58 L925.50,219.74 L926.00,218.91 L926.50,218.07 L927.00,217.23 L927.50,216.39 L928.00,215.54 L928.50,214.70 L929.00,213.85 L929.50,213.00 L930.00,212.16 L930.50,211.31 L931.00,210.45 L931.50,209.60 L932.00,208.75 L932.50,207.89 L933.00,207.04 L933.50,206.18 L934.00,205.32 L934.50,204.46 L935.00,203.59 L935.50,202.73 L936.00,201.87 L936.50,201.00 L937.00,200.13 L937.50,199.26 L938.00,198.39 L938.50,197.52 L939.00,196.65 L939.50,195.77 L940.00,194.89 L940.50,194.02 L941.00,193.14 L941.50,192.26 L942.00,191.38 L942.50,190.49 L943.00,189.61 L943.50,188.72 L944.00,187.83 L944.50,186.95 L945.00,186.06 L945.50,185.16 L946.00,184.27 L946.50,183.38 L947.00,182.48 L947.50,181.58 L948.00,180.69 L948.50,179.79 L949.00,178.89 L949.50,177.98 L950.00,177.08 L950.50,176.17 L951.00,175.27 L951.50,174.36 L952.00,173.45 L952.50,172.54 L953.00,171.63 L953.50,170.71 L954.00,169.80 L954.50,168.88 L955.00,167.96 L955.50,167.04 L956.00,166.12 L956.50,165.20 L957.00,164.28 L957.50,163.35 L958.00,162.43 L958.50,161.50 L959.00,160.57 L959.50,159.64 L960.00,158.71 L960.50,157.78 L961.00,156.84 L961.50,155.91 L962.00,154.97 L962.50,154.03 L963.00,153.09 L963.50,152.15 L964.00,151.21 L964.50,150.26 L965.00,149.32 L965.50,148.37 L966.00,147.42 L966.50,146.47 L967.00,145.52 L967.50,144.57 L968.00,143.62 L968.50,142.66 L969.00,141.70 L969.50,140.75 L970.00,139.79 L970.50,138.83 L971.00,137.86 L971.50,136.90 L972.00,135.94 L972.50,134.97 L973.00,134.00 L973.50,133.03 L974.00,132.06 L974.50,131.09 L975.00,130.12 L975.50,129.14 L976.00,128.17 L976.50,127.19 L977.00,126.21 L977.50,125.23 L978.00,124.25 L978.50,123.27 L979.00,122.28 L979.50,121.30 L980.00,120.31 L980.50,119.32 L981.00,118.33 L981.50,117.34 L982.00,116.35 L982.50,115.36 L983.00,114.36 L983.50,113.36 L984.00,112.37 L984.50,111.37 L985.00,110.37 L985.50,109.36 L986.00,108.36 L986.50,107.36 L987.00,106.35 L987.50,105.34 L988.00,104.33 L988.50,103.32 L989.00,102.31 L989.50,101.30 L990.00,100.28 L990.50,99.27 L991.00,98.25 L991.50,97.23 L992.00,96.21 L992.50,95.19 L993.00,94.17 L993.50,93.14 L994.00,92.12 L994.50,91.09 L995.00,90.06 L995.50,89.03 L996.00,88.00 L996.50,86.97 L997.00,85.93 L997.50,84.90 L998.00,83.86 L998.50,82.82 L999.00,81.78 L999.50,80.74 L1000.00,79.70 L1000.50,78.66 L1001.00,77.61 L1001.50,76.56 L1002.00,75.52 L1002.50,74.47 L1003.00,73.42 L1003.50,72.36 L1004.00,71.31 L1004.50,70.26 L1005.00,69.20 L1005.50,68.14 L1006.00,67.08 L1006.50,66.02 L1007.00,64.96 L1007.50,63.90 L1008.00,62.83 L1008.50,61.77 L1009.00,60.70 L1009.50,59.63 L1010.00,58.56 L1010.50,57.49 L1011.00,56.42 L1011.50,55.34 L1012.00,54.27 L1012.50,53.19 L1013.00,52.11 L1013.50,51.03 L1014.00,49.95 L1014.50,48.87 L1015.00,47.79 L1015.50,46.70 L1016.00,45.61 L1016.50,44.53 L1017.00,43.44 L1017.50,42.35 L1018.00,41.25 L1018.50,40.16 L1019.00,39.07 L1019.50,37.97 L1020.00,36.87 L1020.50,35.77 L1021.00,34.67 L1021.50,33.57 L1022.00,32.47 L1022.50,31.36 L1023.00,30.26 L1023.50,29.15 L1024.00,28.04 L1024.50,26.93 L1025.00,25.82 L1025.50,24.71 L1026.00,23.59 L1026.50,22.48 L1027.00,21.36 L1027.50,20.24 L1028.00,19.12 L1028.50,18.00 L1029.00,16.88 L1029.50,15.75 L1030.00,14.63" fill="none" stroke="#009900" stroke-width="1.75"/>
<path d="M336.00,463.77 L336.50,465.27 L337.00,466.77 L337.50,468.27 L338.00,469.77 L338.50,471.27 L339.00,472.77 L339.50,474.27 L340.00,475.77 L340.50,477.28 L341.00,478.77 L341.50,480.27 L342.00,481.77 L342.50,483.26 L343.00,484.75 L343.50,486.24 L344.00,487.72 L344.50,489.20 L345.00,490.68 L345.50,492.15 L346.00,493.61 L346.50,495.07 L347.00,496.52 L347.50,497.97 L348.00,499.41 L348.50,500.84 L349.00,502.26 L349.50,503.68 L350.00,505.09 L350.50,506.48 L351.00,507.87 L351.50,509.25 L352.00,510.62 L352.50,511.98 L353.00,513.33 L353.50,514.67 L354.00,515.99 L354.50,517.31 L355.00,518.61 L355.50,519.90 L356.00,521.17 L356.50,522.44 L357.00,523.68 L357.50,524.92 L358.00,526.14 L358.50,527.35 L359.00,528.54 L359.50,529.71 L360.00,530.87 L360.50,532.02 L361.00,533.14 L361.50,534.25 L362.00,535.35 L362.50,536.43 L363.00,537.48 L363.50,538.53 L364.00,539.55 L364.50,540.55 L365.00,541.54 L365.50,542.51 L366.00,543.46 L366.50,544.39 L367.00,545.30 L367.50,546.18 L368.00,547.05 L368.50,547.90 L369.00,548.73 L369.50,549.54 L370.00,550.32 L370.50,551.09 L371.00,551.83 L371.50,552.55 L372.00,553.25 L372.50,553.93 L373.00,554.58 L373.50,555.22 L374.00,555.83 L374.50,556.41 L375.00,556.98 L375.50,557.52 L376.00,558.03 L376.50,558.53 L377.00,559.00 L377.50,559.44 L378.00,559.87 L378.50,560.27 L379.00,560.64 L379.50,560.99 L380.00,561.32 L380.50,561.62 L381.00,561.90 L381.50,562.15 L382.00,562.38 L382.50,562.58 L383.00,562.76 L383.50,562.92 L384.00,563.05 L384.50,563.15 L385.00,563.23 L385.50,563.28 L386.00,563.31 L386.50,563.32 L387.00,563.30 L387.50,563.26 L388.00,563.19 L388.50,563.09 L389.00,562.97 L389.50,562.83 L390.00,562.66 L390.50,562.47 L391.00,562.25 L391.50,562.00 L392.00,561.74 L392.50,561.44 L393.00,561.13 L393.50,560.79 L394.00,560.42 L394.50,560.03 L395.00,559.62 L395.50,559.18 L396.00,558.72 L396.50,558.24 L397.00,557.73 L397.50,557.20 L398.00,556.65 L398.50,556.07 L399.00,555.47 L399.50,554.85 L400.00,554.20 L400.50,553.53 L401.00,552.84 L401.50,552.13 L402.00,551.39 L402.50,550.64 L403.00,549.86 L403.50,549.06 L404.00,548.24 L404.50,547.40 L405.00,546.54 L405.50,545.66 L406.00,544.76 L406.50,543.84 L407.00,542.90 L407.50,541.94 L408.00,540.96 L408.50,539.96 L409.00,538.95 L409.50,537.91 L410.00,536.86 L410.50,535.79 L411.00,534.70 L411.50,533.60 L412.00,532.48 L412.50,531.34 L413.00,530.19 L413.50,529.02 L414.00,527.84 L414.50,526.64 L415.00,525.42 L415.50,524.19 L416.00,522.95 L416.50,521.69 L417.00,520.42 L417.50,519.14 L418.00,517.84 L418.50,516.53 L419.00,515.21 L419.50,513.88 L420.00,512.54 L420.50,511.18 L421.00,509.82 L421.50,508.44 L422.00,507.05 L422.50,505.66 L423.00,504.26 L423.50,502.84 L424.00,501.42 L424.50,499.99 L425.00,498.56 L425.50,497.11 L426.00,495.67 L426.50,494.21 L427.00,492.75 L427.50,491.28 L428.00,489.81 L428.50,488.33 L429.00,486.85 L429.50,485.36 L430.00,483.87 L430.50,482.38 L431.00,480.89 L431.50,479.39 L432.00,477.89 L432.50,476.39 L433.00,474.89 L433.50,473.39 L434.00,471.88 L434.50,470.38 L435.00,468.88 L435.50,467.38 L436.00,465.88 L436.50,464.39 L437.00,462.89 L437.50,461.40 L438.00,459.91 L438.50,458.43 L439.00,456.95 L439.50,455.47 L440.00,454.00 L440.50,452.53 L441.00,451.07 L441.50,449.61 L442.00,448.17 L442.50,446.72 L443.00,445.29 L443.50,443.86 L444.00,442.44 L444.50,441.03 L445.00,439.63 L445.50,438.23 L446.00,436.85 L446.50,435.48 L447.00,434.11 L447.50,432.76 L448.00,431.42 L448.50,430.09 L449.00,428.77 L449.50,427.46 L450.00,426.17 L450.50,424.88 L451.00,423.62 L451.50,422.36 L452.00,421.12 L452.50,419.89 L453.00,418.68 L453.50,417.48 L454.00,416.30 L454.50,415.13 L455.00,413.98 L455.50,412.85 L456.00,411.73 L456.50,410.63 L457.00,409.54 L457.50,408.48 L458.00,407.43 L458.50,406.40 L459.00,405.38 L459.50,404.39 L460.00,403.41 L460.50,402.46 L461.00,401.52 L461.50,400.60 L462.00,399.70 L462.50,398.82 L463.00,397.97 L463.50,397.13 L464.00,396.31 L464.50,395.52 L465.00,394.74 L465.50,393.99 L466.00,393.26 L466.50,392.55 L467.00,391.87 L467.50,391.20 L468.00,390.56 L468.50,389.94 L469.00,389.34 L469.50,388.77 L470.00,388.22 L470.50,387.69 L471.00,387.19 L471.50,386.70 L472.00,386.25 L472.50,385.81 L473.00,385.41 L473.50,385.02 L474.00,384.66 L474.50,384.32 L475.00,384.01 L475.50,383.72 L476.00,383.46 L476.50,383.22 L477.00,383.00 L477.50,382.81 L478.00,382.65 L478.50,382.51 L479.00,382.39 L479.50,382.30 L480.00,382.24 L480.50,382.20 L481.00,382.18 L481.50,382.19 L482.00,382.22 L482.50,382.28 L483.00,382.36 L483.50,382.47 L484.00,382.61 L484.50,382.76 L485.00,382.95 L485.50,383.15 L486.00,383.39 L486.50,383.64 L487.00,383.92 L487.50,384.23 L488.00,384.56 L488.50,384.91 L489.00,385.29 L489.50,385.70 L490.00,386.12 L490.50,386.57 L491.00,387.05 L491.50,387.54 L492.00,388.06 L492.50,388.61 L493.00,389.18 L493.50,389.77 L494.00,390.38 L494.50,391.01 L495.00,391.67 L495.50,392.35 L496.00,393.06 L496.50,393.78 L497.00,394.53 L497.50,395.30 L498.00,396.08 L498.50,396.89 L499.00,397.73 L499.50,398.58 L500.00,399.45 L500.50,400.34 L501.00,401.25 L501.50,402.19 L502.00,403.14 L502.50,404.11 L503.00,405.10 L503.50,406.10 L504.00,407.13 L504.50,408.18 L505.00,409.24 L505.50,410.32 L506.00,411.41 L506.50,412.53 L507.00,413.66 L507.50,414.80 L508.00,415.97 L508.50,417.14 L509.00,418.34 L509.50,419.54 L510.00,420.77 L510.50,422.00 L511.00,423.26 L511.50,424.52 L512.00,425.80 L512.50,427.09 L513.00,428.39 L513.50,429.71 L514.00,431.04 L514.50,432.37 L515.00,433.72 L515.50,435.09 L516.00,436.46 L516.50,437.84 L517.00,439.23 L517.50,440.63 L518.00,442.04 L518.50,443.45 L519.00,444.88 L519.50,446.31 L520.00,447.75 L520.50,449.20 L521.00,450.65 L521.50,452.11 L522.00,453.58 L522.50,455.05 L523.00,456.52 L523.50,458.00 L524.00,459.49 L524.50,460.97 L525.00,462.47 L525.50,463.96 L526.00,465.46 L526.50,466.95 L527.00,468.45 L527.50,469.95 L528.00,471.46 L528.50,472.96 L529.00,474.46 L529.50,475.96 L530.00,477.46 L530.50,478.96 L531.00,480.46 L531.50,481.95 L532.00,483.45 L532.50,484.94 L533.00,486.42 L533.50,487.91 L534.00,489.38 L534.50,490.86 L535.00,492.33 L535.50,493.79 L536.00,495.25 L536.50,496.70 L537.00,498.15 L537.50,499.58 L538.00,501.02 L538.50,502.44 L539.00,503.85 L539.50,505.26 L540.00,506.66 L540.50,508.04 L541.00,509.42 L541.50,510.79 L542.00,512.15 L542.50,513.50 L543.00,514.83 L543.50,516.16 L544.00,517.47 L544.50,518.77 L545.00,520.06 L545.50,521.33 L546.00,522.59 L546.50,523.84 L547.00,525.07 L547.50,526.29 L548.00,527.49 L548.50,528.68 L549.00,529.86 L549.50,531.01 L550.00,532.16 L550.50,533.28 L551.00,534.39 L551.50,535.48 L552.00,536.56 L552.50,537.61 L553.00,538.65 L553.50,539.68 L554.00,540.68 L554.50,541.66 L555.00,542.63 L555.50,543.57 L556.00,544.50 L556.50,545.41 L557.00,546.29 L557.50,547.16 L558.00,548.01 L558.50,548.83 L559.00,549.64 L559.50,550.42 L560.00,551.18 L560.50,551.92 L561.00,552.64 L561.50,553.34 L562.00,554.01 L562.50,554.66 L563.00,555.29 L563.50,555.90 L564.00,556.48 L564.50,557.04 L565.00,557.58 L565.50,558.10 L566.00,558.59 L566.50,559.05 L567.00,559.50 L567.50,559.92 L568.00,560.31 L568.50,560.69 L569.00,561.03 L569.50,561.36 L570.00,561.66 L570.50,561.93 L571.00,562.18 L571.50,562.41 L572.00,562.61 L572.50,562.78 L573.00,562.93 L573.50,563.06 L574.00,563.16 L574.50,563.24 L575.00,563.29 L575.50,563.32 L576.00,563.32 L576.50,563.30 L577.00,563.25 L577.50,563.18 L578.00,563.08 L578.50,562.96 L579.00,562.81 L579.50,562.64 L580.00,562.44 L580.50,562.22 L581.00,561.97 L581.50,561.70 L582.00,561.41 L582.50,561.09 L583.00,560.74 L583.50,560.38 L584.00,559.98 L584.50,559.57 L585.00,559.13 L585.50,558.66 L586.00,558.18 L586.50,557.67 L587.00,557.13 L587.50,556.58 L588.00,556.00 L588.50,555.39 L589.00,554.77 L589.50,554.12 L590.00,553.45 L590.50,552.75 L591.00,552.04 L591.50,551.30 L592.00,550.54 L592.50,549.76 L593.00,548.96 L593.50,548.14 L594.00,547.30 L594.50,546.43 L595.00,545.55 L595.50,544.65 L596.00,543.72 L596.50,542.78 L597.00,541.82 L597.50,540.84 L598.00,539.84 L598.50,538.82 L599.00,537.78 L599.50,536.73 L600.00,535.66 L600.50,534.57 L601.00,533.46 L601.50,532.34 L602.00,531.20 L602.50,530.05 L603.00,528.87 L603.50,527.69 L604.00,526.49 L604.50,525.27 L605.00,524.04 L605.50,522.79 L606.00,521.54 L606.50,520.26 L607.00,518.98 L607.50,517.68 L608.00,516.37 L608.50,515.05 L609.00,513.71 L609.50,512.37 L610.00,511.01 L610.50,509.65 L611.00,508.27 L611.50,506.88 L612.00,505.49 L612.50,504.08 L613.00,502.67 L613.50,501.25 L614.00,499.82 L614.50,498.38 L615.00,496.94 L615.50,495.48 L616.00,494.03 L616.50,492.57 L617.00,491.10 L617.50,489.62 L618.00,488.15 L618.50,486.66 L619.00,485.18 L619.50,483.69 L620.00,482.20 L620.50,480.70 L621.00,479.20 L621.50,477.70 L622.00,476.20 L622.50,474.70 L623.00,473.20 L623.50,471.70 L624.00,470.20 L624.50,468.70 L625.00,467.20 L625.50,465.70 L626.00,464.20 L626.50,462.71 L627.00,461.22 L627.50,459.73 L628.00,458.24 L628.50,456.76 L629.00,455.29 L629.50,453.82 L630.00,452.35 L630.50,450.89 L631.00,449.43 L631.50,447.99 L632.00,446.54 L632.50,445.11 L633.00,443.68 L633.50,442.27 L634.00,440.86 L634.50,439.45 L635.00,438.06 L635.50,436.68 L636.00,435.31 L636.50,433.94 L637.00,432.59 L637.50,431.25 L638.00,429.92 L638.50,428.60 L639.00,427.30 L639.50,426.01 L640.00,424.73 L640.50,423.46 L641.00,422.21 L641.50,420.97 L642.00,419.74 L642.50,418.53 L643.00,417.34 L643.50,416.16 L644.00,414.99 L644.50,413.84 L645.00,412.71 L645.50,411.59 L646.00,410.49 L646.50,409.41 L647.00,408.35 L647.50,407.30 L648.00,406.27 L648.50,405.26 L649.00,404.27 L649.50,403.29 L650.00,402.34 L650.50,401.40 L651.00,400.49 L651.50,399.59 L652.00,398.72 L652.50,397.86 L653.00,397.03 L653.50,396.21 L654.00,395.42 L654.50,394.65 L655.00,393.90 L655.50,393.17 L656.00,392.47 L656.50,391.78 L657.00,391.12 L657.50,390.48 L658.00,389.86 L658.50,389.27 L659.00,388.70 L659.50,388.15 L660.00,387.63 L660.50,387.12 L661.00,386.65 L661.50,386.19 L662.00,385.76 L662.50,385.36 L663.00,384.97 L663.50,384.62 L664.00,384.28 L664.50,383.97 L665.00,383.69 L665.50,383.43 L666.00,383.19 L666.50,382.98 L667.00,382.79 L667.50,382.63 L668.00,382.49 L668.50,382.38 L669.00,382.29 L669.50,382.23 L670.00,382.19 L670.50,382.18 L671.00,382.19 L671.50,382.23 L672.00,382.29 L672.50,382.38 L673.00,382.49 L673.50,382.62 L674.00,382.79 L674.50,382.97 L675.00,383.18 L675.50,383.42 L676.00,383.68 L676.50,383.96 L677.00,384.27 L677.50,384.60 L678.00,384.96 L678.50,385.34 L679.00,385.75 L679.50,386.18 L680.00,386.63 L680.50,387.11 L681.00,387.61 L681.50,388.13 L682.00,388.68 L682.50,389.25 L683.00,389.84 L683.50,390.46 L684.00,391.10 L684.50,391.76 L685.00,392.44 L685.50,393.15 L686.00,393.87 L686.50,394.62 L687.00,395.39 L687.50,396.18 L688.00,397.00 L688.50,397.83 L689.00,398.68 L689.50,399.56 L690.00,400.45 L690.50,401.37 L691.00,402.30 L691.50,403.26 L692.00,404.23 L692.50,405.22 L693.00,406.23 L693.50,407.26 L694.00,408.31 L694.50,409.37 L695.00,410.45 L695.50,411.55 L696.00,412.67 L696.50,413.80 L697.00,414.95 L697.50,416.11 L698.00,417.29 L698.50,418.49 L699.00,419.70 L699.50,420.92 L700.00,422.16 L700.50,423.41 L701.00,424.68 L701.50,425.96 L702.00,427.25 L702.50,428.55 L703.00,429.87 L703.50,431.20 L704.00,432.54 L704.50,433.89 L705.00,435.25 L705.50,436.63 L706.00,438.01 L706.50,439.40 L707.00,440.80 L707.50,442.21 L708.00,443.63 L708.50,445.06 L709.00,446.49 L709.50,447.93 L710.00,449.38 L710.50,450.83 L711.00,452.29 L711.50,453.76 L712.00,455.23 L712.50,456.71 L713.00,458.19 L713.50,459.67 L714.00,461.16 L714.50,462.65 L715.00,464.14 L715.50,465.64 L716.00,467.14 L716.50,468.64 L717.00,470.14 L717.50,471.64 L718.00,473.14 L718.50,474.65 L719.00,476.15 L719.50,477.65 L720.00,479.15 L720.50,480.64 L721.00,482.14 L721.50,483.63 L722.00,485.12 L722.50,486.61 L723.00,488.09 L723.50,489.57 L724.00,491.04 L724.50,492.51 L725.00,493.97 L725.50,495.43 L726.00,496.88 L726.50,498.32 L727.00,499.76 L727.50,501.19 L728.00,502.61 L728.50,504.03 L729.00,505.43 L729.50,506.83 L730.00,508.22 L730.50,509.59 L731.00,510.96 L731.50,512.32 L732.00,513.66 L732.50,515.00 L733.00,516.32 L733.50,517.63 L734.00,518.93 L734.50,520.21 L735.00,521.49 L735.50,522.75 L736.00,523.99 L736.50,525.22 L737.00,526.44 L737.50,527.64 L738.00,528.83 L738.50,530.00 L739.00,531.16 L739.50,532.30 L740.00,533.42 L740.50,534.53 L741.00,535.62 L741.50,536.69 L742.00,537.74 L742.50,538.78 L743.00,539.80 L743.50,540.80 L744.00,541.78 L744.50,542.75 L745.00,543.69 L745.50,544.61 L746.00,545.52 L746.50,546.40 L747.00,547.27 L747.50,548.11 L748.00,548.93 L748.50,549.73 L749.00,550.51 L749.50,551.27 L750.00,552.01 L750.50,552.73 L751.00,553.42 L751.50,554.09 L752.00,554.74 L752.50,555.37 L753.00,555.97 L753.50,556.55 L754.00,557.11 L754.50,557.65 L755.00,558.16 L755.50,558.65 L756.00,559.11 L756.50,559.55 L757.00,559.97 L757.50,560.36 L758.00,560.73 L758.50,561.07 L759.00,561.40 L759.50,561.69 L760.00,561.96 L760.50,562.21 L761.00,562.43 L761.50,562.63 L762.00,562.80 L762.50,562.95 L763.00,563.07 L763.50,563.17 L764.00,563.25 L764.50,563.29 L765.00,563.32 L765.50,563.32 L766.00,563.29 L766.50,563.24 L767.00,563.16 L767.50,563.06 L768.00,562.94 L768.50,562.79 L769.00,562.61 L769.50,562.41 L770.00,562.19 L770.50,561.94 L771.00,561.67 L771.50,561.37 L772.00,561.05 L772.50,560.70 L773.00,560.33 L773.50,559.93 L774.00,559.52 L774.50,559.07 L775.00,558.61 L775.50,558.12 L776.00,557.60 L776.50,557.07 L777.00,556.51 L777.50,555.92 L778.00,555.32 L778.50,554.69 L779.00,554.04 L779.50,553.36 L780.00,552.67 L780.50,551.95 L781.00,551.21 L781.50,550.45 L782.00,549.67 L782.50,548.86 L783.00,548.04 L783.50,547.19 L784.00,546.33 L784.50,545.44 L785.00,544.53 L785.50,543.61 L786.00,542.66 L786.50,541.70 L787.00,540.72 L787.50,539.71 L788.00,538.69 L788.50,537.65 L789.00,536.60 L789.50,535.52 L790.00,534.43 L790.50,533.32 L791.00,532.20 L791.50,531.06 L792.00,529.90 L792.50,528.73 L793.00,527.54 L793.50,526.34 L794.00,525.12 L794.50,523.89 L795.00,522.64 L795.50,521.38 L796.00,520.10 L796.50,518.82 L797.00,517.52 L797.50,516.21 L798.00,514.88 L798.50,513.55 L799.00,512.20 L799.50,510.84 L800.00,509.48 L800.50,508.10 L801.00,506.71 L801.50,505.31 L802.00,503.91 L802.50,502.49 L803.00,501.07 L803.50,499.64 L804.00,498.20 L804.50,496.76 L805.00,495.30 L805.50,493.85 L806.00,492.38 L806.50,490.91 L807.00,489.44 L807.50,487.96 L808.00,486.48 L808.50,484.99 L809.00,483.50 L809.50,482.01 L810.00,480.51 L810.50,479.02 L811.00,477.52 L811.50,476.02 L812.00,474.52 L812.50,473.01 L813.00,471.51 L813.50,470.01 L814.00,468.51 L814.50,467.01 L815.00,465.51 L815.50,464.02 L816.00,462.52 L816.50,461.03 L817.00,459.54 L817.50,458.06 L818.00,456.58 L818.50,455.10 L819.00,453.63 L819.50,452.17 L820.00,450.71 L820.50,449.25 L821.00,447.81 L821.50,446.37 L822.00,444.93 L822.50,443.51 L823.00,442.09 L823.50,440.68 L824.00,439.28 L824.50,437.89 L825.00,436.51 L825.50,435.14 L826.00,433.78 L826.50,432.43 L827.00,431.09 L827.50,429.76 L828.00,428.44 L828.50,427.14 L829.00,425.85 L829.50,424.57 L830.00,423.30 L830.50,422.05 L831.00,420.81 L831.50,419.59 L832.00,418.38 L832.50,417.19 L833.00,416.01 L833.50,414.85 L834.00,413.70 L834.50,412.57 L835.00,411.46 L835.50,410.36 L836.00,409.28 L836.50,408.22 L837.00,407.17 L837.50,406.14 L838.00,405.13 L838.50,404.14 L839.00,403.17 L839.50,402.22 L840.00,401.29 L840.50,400.38 L841.00,399.48 L841.50,398.61 L842.00,397.76 L842.50,396.93 L843.00,396.11 L843.50,395.32 L844.00,394.56 L844.50,393.81 L845.00,393.08 L845.50,392.38 L846.00,391.70 L846.50,391.04 L847.00,390.40 L847.50,389.79 L848.00,389.20 L848.50,388.63 L849.00,388.08 L849.50,387.56 L850.00,387.06 L850.50,386.59 L851.00,386.14 L851.50,385.71 L852.00,385.31 L852.50,384.93 L853.00,384.57 L853.50,384.24 L854.00,383.94 L854.50,383.65 L855.00,383.40 L855.50,383.16 L856.00,382.95 L856.50,382.77 L857.00,382.61 L857.50,382.48 L858.00,382.37 L858.50,382.28 L859.00,382.22 L859.50,382.19 L860.00,382.18 L860.50,382.19 L861.00,382.23 L861.50,382.30 L862.00,382.39 L862.50,382.50 L863.00,382.64 L863.50,382.81 L864.00,383.00 L864.50,383.21 L865.00,383.45 L865.50,383.71 L866.00,384.00 L866.50,384.31 L867.00,384.65 L867.50,385.01 L868.00,385.39 L868.50,385.80 L869.00,386.23 L869.50,386.69 L870.00,387.17 L870.50,387.67 L871.00,388.20 L871.50,388.75 L872.00,389.32 L872.50,389.92 L873.00,390.53 L873.50,391.18 L874.00,391.84 L874.50,392.53 L875.00,393.23 L875.50,393.96 L876.00,394.72 L876.50,395.49 L877.00,396.28 L877.50,397.10 L878.00,397.93 L878.50,398.79 L879.00,399.67 L879.50,400.57 L880.00,401.48 L880.50,402.42 L881.00,403.38 L881.50,404.35 L882.00,405.34 L882.50,406.36 L883.00,407.39 L883.50,408.44 L884.00,409.50 L884.50,410.59 L885.00,411.69 L885.50,412.81 L886.00,413.94 L886.50,415.09 L887.00,416.26 L887.50,417.44 L888.00,418.63 L888.50,419.85 L889.00,421.07 L889.50,422.31 L890.00,423.57 L890.50,424.84 L891.00,426.12 L891.50,427.41 L892.00,428.72 L892.50,430.04 L893.00,431.37 L893.50,432.71 L894.00,434.06 L894.50,435.42 L895.00,436.80 L895.50,438.18 L896.00,439.57 L896.50,440.98 L897.00,442.39 L897.50,443.81 L898.00,445.23 L898.50,446.67 L899.00,448.11 L899.50,449.56 L900.00,451.01 L900.50,452.47 L901.00,453.94 L901.50,455.41 L902.00,456.89 L902.50,458.37 L903.00,459.86 L903.50,461.34 L904.00,462.84 L904.50,464.33 L905.00,465.83 L905.50,467.32 L906.00,468.82 L906.50,470.33 L907.00,471.83 L907.50,473.33 L908.00,474.83 L908.50,476.33 L909.00,477.83 L909.50,479.33 L910.00,480.83 L910.50,482.32 L911.00,483.82 L911.50,485.31 L912.00,486.79 L912.50,488.27 L913.00,489.75 L913.50,491.22 L914.00,492.69 L914.50,494.15 L915.00,495.61 L915.50,497.06 L916.00,498.50 L916.50,499.94 L917.00,501.37 L917.50,502.79 L918.00,504.20 L918.50,505.61 L919.00,507.00 L919.50,508.39 L920.00,509.76 L920.50,511.13 L921.00,512.48 L921.50,513.83 L922.00,515.16 L922.50,516.48 L923.00,517.79 L923.50,519.09 L924.00,520.37 L924.50,521.64 L925.00,522.90 L925.50,524.15 L926.00,525.37 L926.50,526.59 L927.00,527.79 L927.50,528.98 L928.00,530.15 L928.50,531.30 L929.00,532.44 L929.50,533.56 L930.00,534.66 L930.50,535.75 L931.00,536.82 L931.50,537.87 L932.00,538.91 L932.50,539.93 L933.00,540.92 L933.50,541.90 L934.00,542.86 L934.50,543.80 L935.00,544.73 L935.50,545.63 L936.00,546.51 L936.50,547.37 L937.00,548.21 L937.50,549.03 L938.00,549.83 L938.50,550.61 L939.00,551.37 L939.50,552.10 L940.00,552.81 L940.50,553.51 L941.00,554.17 L941.50,554.82 L942.00,555.45 L942.50,556.05 L943.00,556.62 L943.50,557.18 L944.00,557.71 L944.50,558.22 L945.00,558.71 L945.50,559.17 L946.00,559.60 L946.50,560.02 L947.00,560.41 L947.50,560.77 L948.00,561.12 L948.50,561.43 L949.00,561.73 L949.50,561.99 L950.00,562.24 L950.50,562.46 L951.00,562.65 L951.50,562.82 L952.00,562.97 L952.50,563.09 L953.00,563.18 L953.50,563.25 L954.00,563.30 L954.50,563.32 L955.00,563.32 L955.50,563.29 L956.00,563.23 L956.50,563.15 L957.00,563.05 L957.50,562.92 L958.00,562.77 L958.50,562.59 L959.00,562.39 L959.50,562.16 L960.00,561.91 L960.50,561.63 L961.00,561.33 L961.50,561.00 L962.00,560.66 L962.50,560.28 L963.00,559.88 L963.50,559.46 L964.00,559.02 L964.50,558.55 L965.00,558.05 L965.50,557.54 L966.00,557.00 L966.50,556.43 L967.00,555.85 L967.50,555.24 L968.00,554.61 L968.50,553.95 L969.00,553.28 L969.50,552.58 L970.00,551.86 L970.50,551.12 L971.00,550.35 L971.50,549.57 L972.00,548.76 L972.50,547.93 L973.00,547.09 L973.50,546.22 L974.00,545.33 L974.50,544.42 L975.00,543.49 L975.50,542.55 L976.00,541.58 L976.50,540.59 L977.00,539.59 L977.50,538.57 L978.00,537.52 L978.50,536.47 L979.00,535.39 L979.50,534.30 L980.00,533.19 L980.50,532.06 L981.00,530.92 L981.50,529.76 L982.00,528.58 L982.50,527.39 L983.00,526.19 L983.50,524.97 L984.00,523.73 L984.50,522.48 L985.00,521.22 L985.50,519.95 L986.00,518.66 L986.50,517.36 L987.00,516.04 L987.50,514.72 L988.00,513.38 L988.50,512.03 L989.00,510.67 L989.50,509.31 L990.00,507.93 L990.50,506.54 L991.00,505.14 L991.50,503.73 L992.00,502.32 L992.50,500.89 L993.00,499.46 L993.50,498.02 L994.00,496.58 L994.50,495.12 L995.00,493.67 L995.50,492.20 L996.00,490.73 L996.50,489.26 L997.00,487.78 L997.50,486.30 L998.00,484.81 L998.50,483.32 L999.00,481.83 L999.50,480.33 L1000.00,478.83 L1000.50,477.33 L1001.00,475.83 L1001.50,474.33 L1002.00,472.83 L1002.50,471.33 L1003.00,469.82 L1003.50,468.32 L1004.00,466.82 L1004.50,465.33 L1005.00,463.83 L1005.50,462.34 L1006.00,460.85 L1006.50,459.36 L1007.00,457.88 L1007.50,456.40 L1008.00,454.92 L1008.50,453.45 L1009.00,451.99 L1009.50,450.53 L1010.00,449.07 L1010.50,447.63 L1011.00,446.19 L1011.50,444.76 L1012.00,443.33 L1012.50,441.92 L1013.00,440.51 L1013.50,439.11 L1014.00,437.72 L1014.50,436.34 L1015.00,434.97 L1015.50,433.61 L1016.00,432.26 L1016.50,430.92 L1017.00,429.59 L1017.50,428.28 L1018.00,426.98 L1018.50,425.69 L1019.00,424.41 L1019.50,423.15 L1020.00,421.90 L1020.50,420.66 L1021.00,419.44 L1021.50,418.23 L1022.00,417.04 L1022.50,415.87 L1023.00,414.70 L1023.50,413.56 L1024.00,412.43 L1024.50,411.32 L1025.00,410.22 L1025.50,409.15 L1026.00,408.08 L1026.50,407.04 L1027.00,406.02 L1027.50,405.01 L1028.00,404.02 L1028.50,403.05 L1029.00,402.11 L1029.50,401.17 L1030.00,400.26 L1030.50,399.37 L1031.00,398.50 L1031.50,397.65 L1032.00,396.82 L1032.50,396.02 L1033.00,395.23 L1033.50,394.46 L1034.00,393.72 L1034.50,393.00 L1035.00,392.29 L1035.50,391.62 L1036.00,390.96 L1036.50,390.33 L1037.00,389.71 L1037.50,389.13 L1038.00,388.56 L1038.50,388.02 L1039.00,387.50 L1039.50,387.00 L1040.00,386.53 L1040.50,386.08 L1041.00,385.66 L1041.50,385.26 L1042.00,384.88 L1042.50,384.53 L1043.00,384.20 L1043.50,383.90 L1044.00,383.62 L1044.50,383.37 L1045.00,383.14 L1045.50,382.93 L1046.00,382.75 L1046.50,382.59 L1047.00,382.46 L1047.50,382.36 L1048.00,382.27 L1048.50,382.22 L1049.00,382.19 L1049.50,382.18 L1050.00,382.20 L1050.50,382.24 L1051.00,382.31 L1051.50,382.40 L1052.00,382.52 L1052.50,382.66 L1053.00,382.83 L1053.50,383.02 L1054.00,383.24 L1054.50,383.48 L1055.00,383.74 L1055.50,384.04 L1056.00,384.35 L1056.50,384.69 L1057.00,385.05 L1057.50,385.44 L1058.00,385.85 L1058.50,386.29 L1059.00,386.75 L1059.50,387.23 L1060.00,387.73 L1060.50,388.26 L1061.00,388.82 L1061.50,389.39 L1062.00,389.99 L1062.50,390.61 L1063.00,391.26 L1063.50,391.92 L1064.00,392.61 L1064.50,393.32 L1065.00,394.06 L1065.50,394.81 L1066.00,395.59 L1066.50,396.38 L1067.00,397.20 L1067.50,398.04 L1068.00,398.90 L1068.50,399.78 L1069.00,400.68 L1069.50,401.60 L1070.00,402.54 L1070.50,403.50 L1071.00,404.47 L1071.50,405.47 L1072.00,406.48 L1072.50,407.52 L1073.00,408.57 L1073.50,409.64 L1074.00,410.72 L1074.50,411.83 L1075.00,412.95 L1075.50,414.08 L1076.00,415.23 L1076.50,416.40 L1077.00,417.59 L1077.50,418.78 L1078.00,420.00 L1078.50,421.23 L1079.00,422.47 L1079.50,423.72 L1080.00,424.99 L1080.50,426.28 L1081.00,427.57 L1081.50,428.88 L1082.00,430.20 L1082.50,431.53 L1083.00,432.88 L1083.50,434.23 L1084.00,435.59 L1084.50,436.97 L1085.00,438.35 L1085.50,439.75 L1086.00,441.15 L1086.50,442.56 L1087.00,443.98 L1087.50,445.41 L1088.00,446.85 L1088.50,448.29 L1089.00,449.74 L1089.50,451.19 L1090.00,452.66 L1090.50,454.12 L1091.00,455.60 L1091.50,457.07 L1092.00,458.55 L1092.50,460.04 L1093.00,461.53 L1093.50,463.02 L1094.00,464.52 L1094.50,466.01 L1095.00,467.51 L1095.50,469.01 L1096.00,470.51 L1096.50,472.01 L1097.00,473.52 L1097.50,475.02 L1098.00,476.52 L1098.50,478.02 L1099.00,479.52 L1099.50,481.01 L1100.00,482.51 L1100.50,484.00 L1101.00,485.49 L1101.50,486.97 L1102.00,488.46 L1102.50,489.93 L1103.00,491.41 L1103.50,492.87 L1104.00,494.33 L1104.50,495.79 L1105.00,497.24 L1105.50,498.68 L1106.00,500.12 L1106.50,501.55 L1107.00,502.97 L1107.50,504.38 L1108.00,505.78 L1108.50,507.17 L1109.00,508.56 L1109.50,509.93 L1110.00,511.30 L1110.50,512.65 L1111.00,513.99 L1111.50,515.33 L1112.00,516.65 L1112.50,517.95 L1113.00,519.25 L1113.50,520.53 L1114.00,521.80 L1114.50,523.06 L1115.00,524.30 L1115.50,525.53 L1116.00,526.74 L1116.50,527.94 L1117.00,529.12 L1117.50,530.29 L1118.00,531.44 L1118.50,532.58 L1119.00,533.70 L1119.50,534.80 L1120.00,535.88 L1120.50,536.95 L1121.00,538.00 L1121.50,539.04 L1122.00,540.05 L1122.50,541.05 L1123.00,542.02 L1123.50,542.98 L1124.00,543.92 L1124.50,544.84 L1125.00,545.74 L1125.50,546.62 L1126.00,547.48 L1126.50,548.32 L1127.00,549.13 L1127.50,549.93 L1128.00,550.70 L1128.50,551.46 L1129.00,552.19 L1129.50,552.90 L1130.00,553.59 L1130.50,554.26 L1131.00,554.90 L1131.50,555.52 L1132.00,556.12 L1132.50,556.69 L1133.00,557.25 L1133.50,557.78 L1134.00,558.28 L1134.50,558.76 L1135.00,559.22 L1135.50,559.66 L1136.00,560.07 L1136.50,560.46 L1137.00,560.82 L1137.50,561.16 L1138.00,561.47 L1138.50,561.76 L1139.00,562.03 L1139.50,562.27 L1140.00,562.48 L1140.50,562.67 L1141.00,562.84 L1141.50,562.98 L1142.00,563.10 L1142.50,563.19 L1143.00,563.26 L1143.50,563.30 L1144.00,563.32 L1144.50,563.31 L1145.00,563.28 L1145.50,563.22 L1146.00,563.14 L1146.50,563.04 L1147.00,562.90 L1147.50,562.75 L1148.00,562.57 L1148.50,562.36 L1149.00,562.13 L1149.50,561.87 L1150.00,561.60 L1150.50,561.29 L1151.00,560.96 L1151.50,560.61 L1152.00,560.23 L1152.50,559.83 L1153.00,559.41 L1153.50,558.96 L1154.00,558.49 L1154.50,557.99 L1155.00,557.47 L1155.50,556.93 L1156.00,556.36 L1156.50,555.77 L1157.00,555.16 L1157.50,554.53 L1158.00,553.87 L1158.50,553.19 L1159.00,552.49 L1159.50,551.77 L1160.00,551.02 L1160.50,550.26 L1161.00,549.47 L1161.50,548.66 L1162.00,547.83 L1162.50,546.98 L1163.00,546.11 L1163.50,545.22 L1164.00,544.31 L1164.50,543.38 L1165.00,542.43 L1165.50,541.46 L1166.00,540.47 L1166.50,539.46 L1167.00,538.44 L1167.50,537.39 L1168.00,536.33 L1168.50,535.26 L1169.00,534.16 L1169.50,533.05 L1170.00,531.92 L1170.50,530.77 L1171.00,529.61 L1171.50,528.43 L1172.00,527.24 L1172.50,526.04 L1173.00,524.81 L1173.50,523.58 L1174.00,522.33 L1174.50,521.06 L1175.00,519.79 L1175.50,518.50 L1176.00,517.19 L1176.50,515.88 L1177.00,514.55 L1177.50,513.21 L1178.00,511.87 L1178.50,510.51 L1179.00,509.13 L1179.50,507.75 L1180.00,506.36 L1180.50,504.97 L1181.00,503.56 L1181.50,502.14 L1182.00,500.72 L1182.50,499.28 L1183.00,497.84 L1183.50,496.40 L1184.00,494.94 L1184.50,493.48 L1185.00,492.02 L1185.50,490.55 L1186.00,489.07 L1186.50,487.59 L1187.00,486.11 L1187.50,484.62 L1188.00,483.13 L1188.50,481.64 L1189.00,480.14 L1189.50,478.65 L1190.00,477.15 L1190.50,475.65 L1191.00,474.14 L1191.50,472.64 L1192.00,471.14 L1192.50,469.64 L1193.00,468.14 L1193.50,466.64 L1194.00,465.14 L1194.50,463.65 L1195.00,462.15 L1195.50,460.66 L1196.00,459.18 L1196.50,457.69 L1197.00,456.21 L1197.50,454.74 L1198.00,453.27 L1198.50,451.81 L1199.00,450.35 L1199.50,448.89 L1200.00,447.45 L1200.50,446.01 L1201.00,444.58 L1201.50,443.16 L1202.00,441.74 L1202.50,440.33 L1203.00,438.94 L1203.50,437.55 L1204.00,436.17 L1204.50,434.80 L1205.00,433.44 L1205.50,432.09 L1206.00,430.76 L1206.50,429.43 L1207.00,428.12 L1207.50,426.82 L1208.00,425.53 L1208.50,424.25 L1209.00,422.99 L1209.50,421.74 L1210.00,420.51 L1210.50,419.29 L1211.00,418.09 L1211.50,416.90 L1212.00,415.72 L1212.50,414.56 L1213.00,413.42 L1213.50,412.29 L1214.00,411.18 L1214.50,410.09 L1215.00,409.01 L1215.50,407.95 L1216.00,406.91 L1216.50,405.89 L1217.00,404.89 L1217.50,403.90 L1218.00,402.94 L1218.50,401.99 L1219.00,401.06 L1219.50,400.15 L1220.00,399.26 L1220.50,398.40 L1221.00,397.55 L1221.50,396.72 L1222.00,395.92 L1222.50,395.13 L1223.00,394.37 L1223.50,393.63 L1224.00,392.91 L1224.50,392.21 L1225.00,391.53 L1225.50,390.88 L1226.00,390.25 L1226.50,389.64 L1227.00,389.05 L1227.50,388.49 L1228.00,387.95 L1228.50,387.44 L1229.00,386.94 L1229.50,386.48 L1230.00,386.03 L1230.50,385.61 L1231.00,385.21 L1231.50,384.84 L1232.00,384.49 L1232.50,384.16 L1233.00,383.86 L1233.50,383.59 L1234.00,383.34 L1234.50,383.11 L1235.00,382.91 L1235.50,382.73 L1236.00,382.58 L1236.50,382.45 L1237.00,382.34 L1237.50,382.27 L1238.00,382.21 L1238.50,382.18 L1239.00,382.18 L1239.50,382.20 L1240.00,382.25 L1240.50,382.32 L1241.00,382.41 L1241.50,382.54 L1242.00,382.68 L1242.50,382.85 L1243.00,383.05 L1243.50,383.27 L1244.00,383.51 L1244.50,383.78 L1245.00,384.07 L1245.50,384.39 L1246.00,384.73 L1246.50,385.10 L1247.00,385.49 L1247.50,385.90 L1248.00,386.34 L1248.50,386.80 L1249.00,387.29 L1249.50,387.80 L1250.00,388.33 L1250.50,388.89 L1251.00,389.47 L1251.50,390.07 L1252.00,390.69 L1252.50,391.34 L1253.00,392.01 L1253.50,392.70 L1254.00,393.41 L1254.50,394.15 L1255.00,394.91 L1255.50,395.68 L1256.00,396.48 L1256.50,397.30 L1257.00,398.15 L1257.50,399.01 L1258.00,399.89 L1258.50,400.79 L1259.00,401.71 L1259.50,402.66 L1260.00,403.62 L1260.50,404.60 L1261.00,405.59 L1261.50,406.61 L1262.00,407.65 L1262.50,408.70 L1263.00,409.77 L1263.50,410.86 L1264.00,411.96 L1264.50,413.09 L1265.00,414.22 L1265.50,415.38 L1266.00,416.55 L1266.50,417.73 L1267.00,418.93 L1267.50,420.15 L1268.00,421.38 L1268.50,422.62 L1269.00,423.88 L1269.50,425.15 L1270.00,426.44 L1270.50,427.73 L1271.00,429.04 L1271.50,430.36 L1272.00,431.70 L1272.50,433.04 L1273.00,434.40 L1273.50,435.76 L1274.00,437.14 L1274.50,438.53 L1275.00,439.92 L1275.50,441.33 L1276.00,442.74 L1276.50,444.16 L1277.00,445.59 L1277.50,447.02 L1278.00,448.47 L1278.50,449.92 L1279.00,451.38 L1279.50,452.84 L1280.00,454.31 L1280.50,455.78 L1281.00,457.26 L1281.50,458.74 L1282.00,460.22" fill="none" stroke="#0000e6" stroke-width="1.75"/>
<circle cx="902.82" cy="256.27" r="2.4" fill="#2a2a2a"/>
<circle cx="839.34" cy="256.27" r="2.4" fill="#2a2a2a"/>
<circle cx="839.34" cy="402.53" r="2.4" fill="#2a2a2a"/>
<circle cx="902.82" cy="402.53" r="2.8" fill="#ff0000" stroke="#000" stroke-width="1"/>
<circle cx="902.82" cy="472.5" r="2.9" fill="#7f7fff" stroke="#222" stroke-width="1"/>
<g font-family="Liberation Sans, sans-serif" font-size="13"><text x="824.6" y="254.8" fill="#444">B</text><text x="914.8" y="254.8" fill="#444">A</text><text x="824.2" y="408.6" fill="#444">C</text><text x="912.4" y="406.8" fill="#ff0000">D</text><text x="910.5" y="484.5" fill="#7f7fff" font-size="14">x</text><text x="916.6" y="490.8" fill="#7f7fff" font-size="12">0</text></g>
<g font-family="Liberation Sans, sans-serif" font-size="16"><text x="1043.6" y="157.6" fill="#009900" textLength="38" lengthAdjust="spacingAndGlyphs">h(x) =</text><text x="1089.1" y="147.5" fill="#009900" font-size="15">x</text><text x="1097.2" y="141" fill="#009900" font-size="11.5">2</text><rect x="1087.9" y="151" width="17" height="1.1" fill="#009900"/><text x="1092.3" y="165.8" fill="#009900" font-size="14">4</text><text x="1043.6" y="201" fill="#2a2ad6" textLength="63" lengthAdjust="spacingAndGlyphs">g(x) = sin</text><text x="1116.3" y="201" fill="#2a2ad6">3</text><text x="1129.2" y="201" fill="#2a2ad6">x</text><text x="1046.6" y="242.6" fill="#ff0000" textLength="87" lengthAdjust="spacingAndGlyphs">f(x) = g(h(x))</text></g>
<path d="M1114.6,185.6 Q1108.6,194.6 1114.6,203.6" fill="none" stroke="#2a2ad6" stroke-width="1.3"/>
<path d="M1139.6,185.6 Q1145.6,194.6 1139.6,203.6" fill="none" stroke="#2a2ad6" stroke-width="1.3"/>
</g>
<path d="M1281,53 V95 H1240.5 A5.5,5.5 0 0 1 1235,89.5 V53" fill="#fff" stroke="#dcdcdc" stroke-width="1"/>
<path d="M1243,65.3 H1261 M1243,73.4 H1251 M1243,81.9 H1251" stroke="#9a9a9a" stroke-width="3"/>
<circle cx="1258.1" cy="77.2" r="6.4" fill="rgba(0,153,0,0.4)" stroke="#009900" stroke-width="1.5"/>
<path d="M1264,63 L1274.5,78.4 L1255.6,78.4 Z" fill="rgba(0,0,255,0.4)" stroke="#0000ff" stroke-width="1.5" stroke-linejoin="miter"/>
</svg>
</body></html>
